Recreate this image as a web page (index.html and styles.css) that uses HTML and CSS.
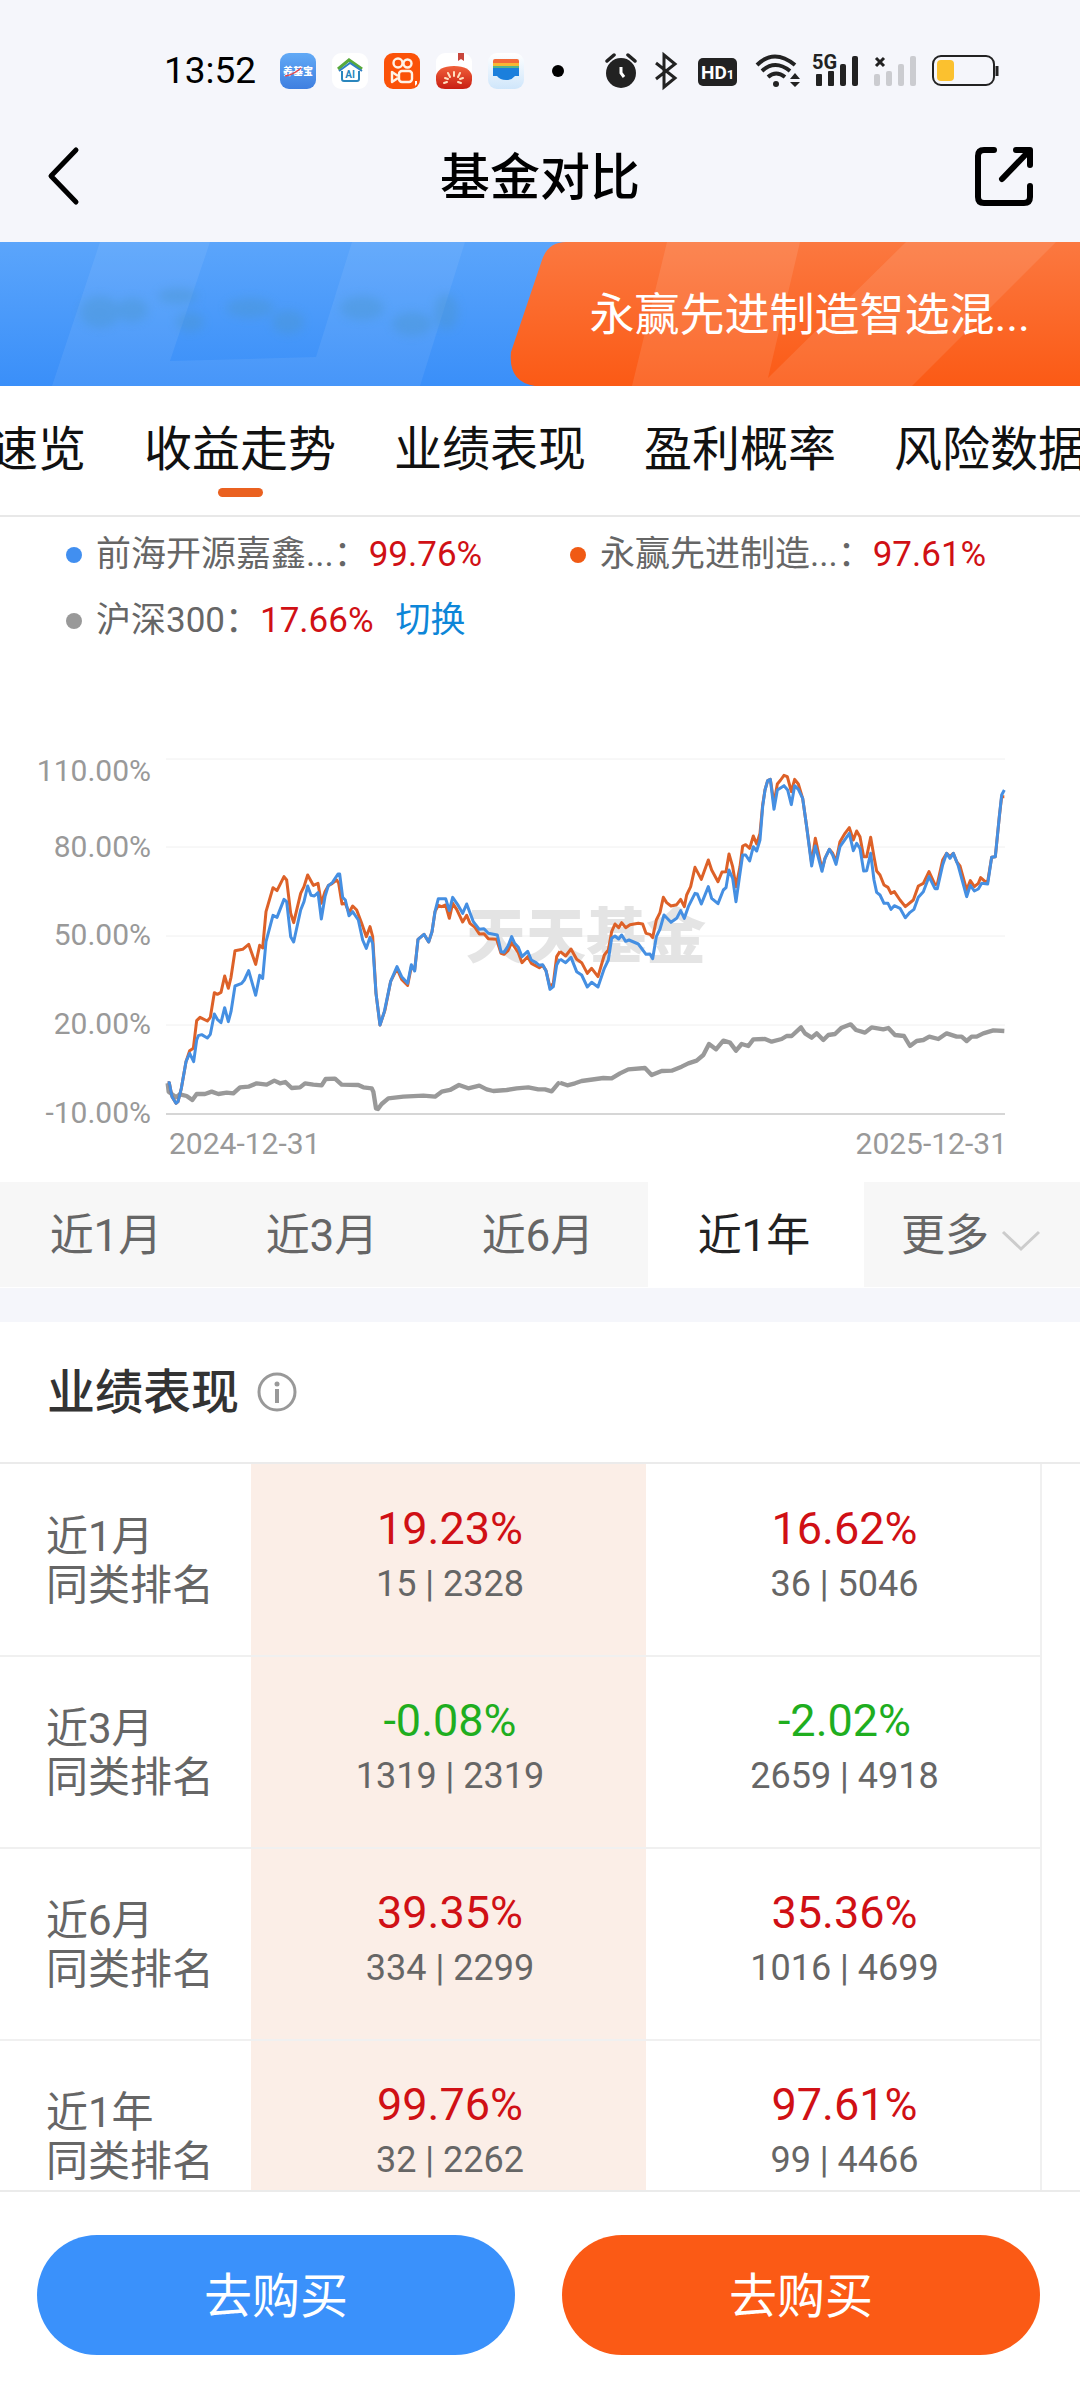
FILE: index.html
```html
<!DOCTYPE html>
<html lang="zh-CN">
<head>
<meta charset="utf-8">
<meta name="viewport" content="width=device-width, initial-scale=1">
<title>基金对比</title>
<link rel="stylesheet" href="styles.css">
</head>
<body>
<div class="top">
  <div class="status">
    <div class="status-left">
      <span class="clock">13:52</span>
      <svg class="app" viewBox="0 0 36 36"><defs><linearGradient id="a1" x2="0" y2="1"><stop stop-color="#62aaf6"/><stop offset="1" stop-color="#3f7fe0"/></linearGradient></defs><rect width="36" height="36" rx="9" fill="url(#a1)"/><text class="app-label" x="18" y="22" text-anchor="middle">养基宝</text><path d="M5 23q8-1 16-8" stroke="#e5484d" stroke-width="1.500" fill="none"/></svg>
      <svg class="app" viewBox="0 0 36 36"><rect width="36" height="36" rx="9" fill="#fff"/><path d="M6 16 17 7l13 9" fill="none" stroke="#58a93c" stroke-width="3"/><path d="M7 18 18 10l12 8" fill="none" stroke="#2f7fc4" stroke-width="2"/><path d="M10 18v8q0 2 2 2h13q2 0 2-2v-8" fill="none" stroke="#2a86bd" stroke-width="2"/><text class="ai-label" x="18" y="25" text-anchor="middle">AI</text></svg>
      <svg class="app" viewBox="0 0 36 36"><rect width="36" height="36" rx="9" fill="#fb5208"/><g fill="none" stroke="#fff3e6" stroke-width="2.400"><circle cx="14" cy="10" r="4.500"/><circle cx="23.500" cy="10.500" r="4"/><rect x="15" y="18" width="13" height="11" rx="3"/><path d="m14 23-6-4v10l6-4" stroke-linejoin="round"/></g><path d="M31 28h2v3l-2 2z" fill="#fff"/></svg>
      <svg class="app" viewBox="0 0 36 36"><defs><linearGradient id="a4" x2="0" y2="1"><stop stop-color="#f0603a"/><stop offset="1" stop-color="#c81e12"/></linearGradient></defs><rect width="36" height="36" rx="9" fill="#fff"/><path d="M22 0h6v8l-3-2-3 2z" fill="#c8463c"/><path d="M0 23q2-10 18-10t18 10v4q0 9-9 9H9q-9 0-9-9z" fill="url(#a4)"/><path d="M18 19v4m-6-3 2 4m10-4-2 4m-13 1 3 1m15-1-3 1m-16 4 3-1m14 1-3-1" stroke="#ffe0c0" stroke-width="2" stroke-linecap="round"/></svg>
      <svg class="app" viewBox="0 0 36 36"><defs><linearGradient id="a5" x2="0" y2="1"><stop stop-color="#fff"/><stop offset="1" stop-color="#cfe6fb"/></linearGradient></defs><rect width="36" height="36" rx="9" fill="url(#a5)"/><path d="M5 8q0-2 2-2h22q2 0 2 2v3H5z" fill="#f26a3a"/><path d="M5 10h26v4H5z" fill="#f7b733"/><path d="M5 13h26v3H5z" fill="#54b58b"/><path d="M5 15h26v8h-4q-3 4-9 4t-9-4H5z" fill="#1b7fdc"/></svg>
      <span class="dot"></span>
    </div>
    <div class="status-right">
      <svg width="36" height="40" viewBox="0 0 36 40" fill="#222"><circle cx="16" cy="22" r="15"/><path d="m2 10 7-6m14 0 7 6" stroke="#222" stroke-width="3.500" stroke-linecap="round"/><path d="M16 16v6l3 4" stroke="#fff" stroke-width="3" fill="none"/></svg>
      <svg width="30" height="40" viewBox="0 0 30 40" fill="none" stroke="#222" stroke-width="3"><path d="m3 12 19 15-11 9V4l11 9L3 28"/></svg>
      <svg width="46" height="40" viewBox="0 0 46 40"><rect x="3" y="7" width="39" height="28" rx="5" fill="#222"/><text class="hd-label" x="6" y="28">HD<tspan class="hd-sub">1</tspan></text></svg>
      <svg width="47" height="40" viewBox="0 0 47 40" fill="none" stroke="#222" stroke-width="4"><path d="M4 14q17-17 38 0M9 20q13-12 28 0M15 26q8-7 17 0"/><circle cx="23" cy="33" r="3" fill="#222" stroke="none"/><path d="m42 22 5 6H37zM42 36l5-5H37z" fill="#222" stroke="none"/></svg>
      <svg width="48" height="40" viewBox="0 0 48 40" fill="#222"><rect x="4" y="23" width="6" height="12" rx="1"/><rect x="16" y="20" width="6" height="15" rx="1"/><rect x="28" y="13" width="6" height="22" rx="2"/><rect x="40" y="5" width="6" height="30" rx="2"/><text class="net-label" x="0" y="18">5G</text></svg>
      <svg width="46" height="40" viewBox="0 0 46 40" fill="#cbccd0"><rect x="2" y="23" width="6" height="12" rx="2"/><rect x="14" y="20" width="6" height="15" rx="2"/><rect x="26" y="13" width="6" height="22" rx="2"/><rect x="38" y="5" width="6" height="30" rx="2"/><path d="m4 7 8 8m0-8-8 8" stroke="#222" stroke-width="3"/></svg>
      <svg width="70" height="40" viewBox="0 0 70 40"><rect x="3" y="5" width="61" height="29" rx="8" fill="none" stroke="#222" stroke-width="2"/><rect x="7" y="9" width="17" height="21" rx="4" fill="#fbc12f"/><path d="M67 15v10" stroke="#222" stroke-width="3"/></svg>
    </div>
  </div>
  <header class="header">
    <button class="icon-btn" aria-label="返回"><svg width="40" height="60" viewBox="0 0 40 60" fill="none" stroke="#000" stroke-width="5" stroke-linecap="round" stroke-linejoin="round"><path d="M30 4 5 30l25 26"/></svg></button>
    <h1>基金对比</h1>
    <button class="icon-btn" aria-label="分享"><svg width="60" height="60" viewBox="0 0 60 60" fill="none" stroke="#000" stroke-width="6" stroke-linecap="round" stroke-linejoin="round"><path d="M20 4H10q-6 0-6 6v41q0 6 6 6h40q6 0 6-6V40M42 4h14v15M55 5 28 33"/></svg></button>
  </header>
</div>

<section class="banner">
  <svg class="banner-bg" viewBox="0 0 1080 144" preserveAspectRatio="none">
    <defs>
      <linearGradient id="gb" x2="0" y2="1"><stop stop-color="#5ba5fb"/><stop offset="1" stop-color="#3a8ff9"/></linearGradient>
      <linearGradient id="go" x2="0" y2="1"><stop stop-color="#fb7840"/><stop offset="1" stop-color="#fb5a15"/></linearGradient>
      <filter id="soft" x="-20%" y="-50%" width="140%" height="200%"><feGaussianBlur stdDeviation="5"/></filter>
    </defs>
    <rect width="1080" height="144" fill="url(#gb)"/>
    <path d="M100 0h110l-40 119 146-4L352 0h113l-45 144H52z" fill="#fff" opacity=".07"/>
    <g fill="#4b95cc" opacity=".4" filter="url(#soft)"><ellipse cx="100" cy="70" rx="20" ry="16"/><ellipse cx="132" cy="68" rx="16" ry="12"/><ellipse cx="178" cy="54" rx="20" ry="8"/><ellipse cx="190" cy="80" rx="14" ry="10"/><ellipse cx="250" cy="66" rx="24" ry="10"/><ellipse cx="288" cy="80" rx="16" ry="12"/><ellipse cx="362" cy="66" rx="22" ry="12"/><ellipse cx="412" cy="82" rx="20" ry="12"/><ellipse cx="446" cy="70" rx="12" ry="18"/></g>
    <path d="M1080 0H566q-18 0-24 18L511 110q-3 30 24 34h545z" fill="url(#go)"/>
    <path d="M667 0h133l-32 136L906 0h150L912 144H632z" fill="#fff" opacity=".1"/>
  </svg>
  <span class="banner-name">永赢先进制造智选混...</span>
</section>

<nav class="tabs">
  <a href="#overview">速览</a>
  <a href="#trend" class="active" aria-current="true">收益走势</a>
  <a href="#performance">业绩表现</a>
  <a href="#odds">盈利概率</a>
  <a href="#risk">风险数据</a>
</nav>

<section class="trend" id="trend">
  <div class="legend">
    <div class="legend-item"><i class="mark blue"></i><span>前海开源嘉鑫...：</span><b>99.76%</b></div>
    <div class="legend-item"><i class="mark orange"></i><span>永赢先进制造...：</span><b>97.61%</b></div>
    <div class="legend-item"><i class="mark gray"></i><span>沪深300：</span><b>17.66%</b><button class="switch">切换</button></div>
  </div>
  <svg class="chart" viewBox="0 0 1080 442" role="img" aria-label="收益走势">
    <g stroke="#f0f0f0" stroke-width="1"><path d="M166 19h839M166 107h839M166 196h839M166 285h839"/><path d="M166 374h839" stroke="#d6d6d6" stroke-width="2"/></g>
    <text class="watermark" x="466" y="218">天天基金</text>
    <g class="axis" text-anchor="end"><text x="151" y="41">110.00%</text><text x="151" y="117">80.00%</text><text x="151" y="205">50.00%</text><text x="151" y="294">20.00%</text><text x="151" y="383">-10.00%</text></g>
    <g class="axis"><text x="169" y="414">2024-12-31</text><text x="1007" y="414" text-anchor="end">2025-12-31</text></g>
    <g class="lines" transform="translate(140 0) scale(.33333)">
      <path class="l-gray" d="M83 1030 86 1055 108 1072 120 1063 140 1068 157 1080 170 1062 195 1062 215 1055 235 1062 260 1058 280 1060 300 1042 325 1040 350 1030 380 1034 403 1022 420 1030 436 1026 455 1044 480 1042 495 1030 520 1034 545 1036 557 1017 585 1016 605 1034 655 1035 670 1042 695 1045 700 1055 708 1105 714 1107 725 1092 745 1075 790 1070 850 1067 885 1070 905 1055 930 1050 957 1035 985 1045 1018 1037 1040 1048 1060 1053 1100 1050 1130 1045 1165 1042 1195 1048 1215 1048 1235 1054 1255 1030 1260 1028"/>
      <path class="l-orange" d="M83 1028 88 1028 96 1070 108 1090 114 1085 124 1045 138 965 149 932 160 925 170 842 180 832 202 843 211 832 223 758 232 763 243 757 254 708 265 745 273 712 285 632 308 628 326 613 347 673 359 616 368 624 378 515 399 443 411 452 432 410 440 420 452 520 461 548 482 460 492 440 503 405 520 436 534 430 544 490 555 455 565 437 577 430 590 420 596 430 606 492 616 490 627 518 638 498 650 510 665 550 679 590 690 560 698 590 708 760 720 855 735 810 752 724 771 686 785 718 803 736 814 680 824 690 834 598 852 583 866 606 876 575 885 515 895 496 905 500 917 495 928 535 938 490 950 508 968 546 980 526 990 550 1005 562 1018 582 1032 581 1045 596 1070 598 1083 640 1092 643 1104 632 1115 608 1135 638 1146 668 1163 650 1174 670 1198 683 1208 676 1218 692 1230 742 1240 730 1250 650 1260 634"/>
      <path class="l-blue" d="M83 1028 88 1028 96 1070 108 1090 114 1085 124 1045 138 965 149 940 161 965 170 900 175 887 185 884 202 894 211 883 223 822 232 838 243 848 254 803 265 845 273 815 285 738 305 730 313 720 326 692 347 766 359 706 368 715 378 605 399 526 411 532 432 478 440 485 452 590 461 606 482 510 492 485 503 438 513 466 523 468 534 458 544 537 555 470 565 437 577 428 594 402 599 402 608 472 616 480 627 527 638 515 655 540 668 600 679 625 690 592 698 610 708 760 720 855 733 815 752 724 771 680 785 710 803 730 814 674 824 693 834 598 852 583 866 606 876 575 885 515 895 476 917 476 928 512 938 472 955 497 968 520 980 492 1000 545 1018 568 1032 566 1045 580 1072 585 1083 635 1092 637 1104 618 1115 590 1124 610 1135 622 1146 650 1163 634 1174 660 1188 668 1198 676 1208 674 1218 692 1230 748 1240 740 1250 675 1260 657"/>
      <g transform="translate(1260 0)">
        <path class="l-gray" d="M0 1028 22 1036 45 1030 65 1023 130 1014 155 1015 180 1000 205 988 255 984 275 1005 305 993 335 992 365 980 385 970 410 962 430 945 447 912 468 928 490 902 510 908 528 932 545 912 565 918 580 898 615 897 635 905 665 897 680 888 695 888 723 862 735 880 755 893 770 880 790 900 805 885 825 882 845 863 872 853 888 870 915 878 935 862 970 868 985 864 1005 885 1032 888 1050 918 1070 903 1090 900 1108 890 1135 897 1160 880 1190 890 1205 890 1220 903 1235 890 1250 890 1270 880 1300 871 1333 873"/>
        <path class="l-orange" d="M0 634 17 648 33 627 50 658 65 668 82 700 95 685 114 710 133 645 145 630 155 575 165 552 176 563 185 548 197 563 210 554 235 550 248 552 258 580 270 583 278 593 289 540 300 518 310 472 320 488 333 498 350 494 362 478 373 500 380 465 392 440 405 382 424 418 445 360 455 390 474 425 486 396 498 395 507 342 518 380 528 440 540 380 548 318 557 314 569 325 580 288 590 312 600 280 608 195 615 150 623 122 631 118 642 190 652 132 662 120 672 106 682 110 694 155 704 118 715 132 728 175 740 260 755 370 766 295 786 388 795 355 808 328 818 340 828 365 840 305 855 280 868 263 880 300 890 273 900 290 911 350 920 350 932 292 942 350 950 393 960 405 972 435 984 442 993 460 1003 455 1020 480 1036 500 1060 480 1075 438 1090 430 1107 395 1125 434 1132 432 1148 360 1160 340 1170 350 1180 340 1190 365 1200 378 1220 450 1231 422 1243 440 1255 430 1262 413 1275 424 1283 425 1295 352 1306 350 1318 230 1325 170 1333 170"/>
        <path class="l-blue" d="M0 657 17 668 33 652 50 695 65 705 82 741 95 727 114 741 133 685 145 660 155 595 165 588 176 597 185 585 197 604 207 600 235 612 258 643 270 642 278 656 289 590 300 567 312 525 333 547 350 535 362 512 373 535 385 500 405 460 412 462 424 492 445 440 455 475 474 491 490 450 498 443 507 390 518 415 528 485 540 400 548 345 557 345 569 363 580 320 590 333 600 300 608 200 615 150 623 122 631 118 642 208 652 150 672 137 683 150 694 194 704 137 715 148 728 175 740 260 755 378 766 318 786 394 795 355 808 328 818 345 828 373 840 320 868 280 880 332 890 310 900 325 911 393 920 392 932 340 942 420 950 457 960 465 972 490 984 490 993 508 1003 497 1020 505 1036 533 1050 517 1062 508 1075 472 1090 455 1107 410 1125 446 1132 446 1148 375 1160 340 1170 355 1180 340 1195 378 1205 415 1220 470 1231 436 1243 453 1255 447 1265 430 1283 432 1295 352 1306 350 1318 230 1325 165 1333 150"/>
      </g>
    </g>
  </svg>
  <div class="ranges">
    <button>近1月</button><button>近3月</button><button>近6月</button><button class="on">近1年</button><button class="more">更多<svg width="40" height="24" viewBox="0 0 40 24" fill="none" stroke="#ccc" stroke-width="3"><path d="m2 3 18 17L38 3"/></svg></button>
  </div>
</section>

<section class="performance" id="performance">
  <div class="section-title"><h2>业绩表现</h2><svg width="40" height="40" viewBox="0 0 40 40" fill="none" stroke="#999" stroke-width="3"><circle cx="20" cy="20" r="18"/><path d="M20 17v14" stroke-width="4"/><circle cx="20" cy="12" r="2.500" fill="#999" stroke="none"/></svg></div>
  <table>
    <colgroup><col class="c-name"><col class="c-fund"><col class="c-fund"><col></colgroup>
    <tbody>
      <tr><th scope="row">近1月<br>同类排名</th><td class="best"><b>19.23%</b><span>15 | 2328</span></td><td><b>16.62%</b><span>36 | 5046</span></td><td></td></tr>
      <tr><th scope="row">近3月<br>同类排名</th><td class="best"><b class="down">-0.08%</b><span>1319 | 2319</span></td><td><b class="down">-2.02%</b><span>2659 | 4918</span></td><td></td></tr>
      <tr><th scope="row">近6月<br>同类排名</th><td class="best"><b>39.35%</b><span>334 | 2299</span></td><td><b>35.36%</b><span>1016 | 4699</span></td><td></td></tr>
      <tr><th scope="row">近1年<br>同类排名</th><td class="best"><b>99.76%</b><span>32 | 2262</span></td><td><b>97.61%</b><span>99 | 4466</span></td><td></td></tr>
    </tbody>
  </table>
</section>

<footer class="actions">
  <button class="buy buy-blue">去购买</button>
  <button class="buy buy-orange">去购买</button>
</footer>
</body>
</html>
```
FILE: styles.css
```css
* { box-sizing: border-box; }
body {
  margin: 0;
  height: 100vh;
  display: flex;
  flex-direction: column;
  overflow: hidden;
  background: #fff;
  color: #333;
  font-family: Roboto, "Noto Sans CJK SC", sans-serif;
}
h1, h2 { margin: 0; font-weight: 500; }
button { border: 0; padding: 0; background: none; font-family: inherit; color: inherit; }
svg { display: block; }
body > * { flex: none; }

.top { background: #f5f6fb; padding-bottom: 32px; }
.status {
  display: flex;
  justify-content: space-between;
  align-items: center;
  height: 142px;
  padding: 0 80px 0 164px;
}
.status-left { display: flex; align-items: center; gap: 16px; }
.clock { margin-right: 8px; font-size: 37px; font-weight: 400; line-height: 40px; color: #000; }
.app { width: 36px; height: 36px; }
.app-label { font-size: 10px; font-weight: 900; fill: #fff; }
.ai-label { font-size: 10px; font-weight: 700; fill: #2a86bd; }
.dot { width: 12px; height: 12px; margin-left: 12px; border-radius: 50%; background: #000; }
.status-right { display: flex; align-items: center; gap: 12px; }
.hd-label { font-size: 19px; font-weight: 700; fill: #fff; }
.hd-sub { font-size: 13px; }
.net-label { font-size: 20px; font-weight: 700; stroke: #f5f6fb; stroke-width: 3px; paint-order: stroke; }

.header {
  display: flex;
  justify-content: space-between;
  align-items: center;
  height: 68px;
  padding: 0 46px;
}
.icon-btn { width: 60px; height: 60px; }
h1 { padding-top: 4px; font-size: 50px; line-height: 64px; color: #000; }

.banner {
  position: relative;
  height: 144px;
  display: flex;
  align-items: center;
  justify-content: flex-end;
  padding: 4px 50px 0 0;
}
.banner-bg { position: absolute; inset: 0; width: 100%; height: 100%; }
.banner-name { position: relative; font-size: 45px; line-height: 64px; color: #fff; }

.tabs {
  display: flex;
  gap: 58px;
  height: 131px;
  padding-top: 32px;
  overflow: hidden;
  border-bottom: 2px solid #e8e8e8;
}
.tabs a {
  flex: none;
  display: flex;
  flex-direction: column;
  align-items: center;
  font-size: 48px;
  line-height: 64px;
  color: #111;
  text-decoration: none;
}
.tabs a:first-child { margin-left: -10px; }
.tabs .active::after {
  content: "";
  width: 45px;
  height: 9px;
  margin-top: 6px;
  border-radius: 5px;
  background: #ea6120;
}

.legend {
  display: grid;
  grid-template-columns: 504px 1fr;
  row-gap: 18px;
  padding: 14px 0 0 66px;
  font-size: 35px;
  line-height: 48px;
  color: #666;
}
.legend-item { display: flex; align-items: center; white-space: nowrap; }
.legend b { font-weight: 400; color: #d01015; }
.mark { width: 16px; height: 16px; margin-right: 14px; border-radius: 50%; }
.blue { background: #418ff0; }
.orange { background: #f05a14; }
.gray { background: #999; }
.switch { margin-left: 22px; font-size: 35px; line-height: 48px; color: #0d86d8; }

.chart { width: 100%; margin-top: 95px; }
.axis { font-size: 30px; fill: #999; }
.watermark { font-size: 60px; font-weight: 900; fill: #e4e4e4; }
.lines path { fill: none; stroke-width: 9px; stroke-linejoin: round; }
.lines .l-gray { stroke: #999; stroke-width: 13px; }
.lines .l-orange { stroke: #dd6128; }
.lines .l-blue { stroke: #458fe2; }

.ranges { display: grid; grid-template-columns: repeat(5, 1fr); height: 105px; background: #f7f7f7; }
.ranges button { font-size: 44px; line-height: 64px; color: #666; padding: 2px 4px 0 0; }
.ranges .on { background: #fff; color: #222; }
.ranges .more { display: flex; align-items: center; justify-content: center; gap: 12px; padding-right: 2px; }
.more svg { margin-top: 10px; }

.performance { flex: 1; min-height: 0; overflow: hidden; border-top: 34px solid #f5f6fb; }
.trend { padding-bottom: 1px; }
.section-title { display: flex; align-items: center; gap: 18px; height: 142px; padding-left: 47px; border-bottom: 2px solid #ebebeb; }
h2 { padding-top: 2px; font-size: 48px; line-height: 64px; }

table { width: 100%; border-collapse: collapse; table-layout: fixed; }
.c-name { width: 251px; }
.c-fund { width: 395px; }
tr { height: 192px; border-bottom: 2px solid #f0f0f0; }
th { padding: 2px 0 0 46px; text-align: left; font-size: 42px; font-weight: 400; line-height: 49px; color: #666; }
td { padding: 0 0 10px 3px; text-align: center; }
td + td { border-right: 2px solid #f0f0f0; }
td:last-child { border-right: 0; border-bottom: 2px solid #fff; }
.best { background: #fbeee7; }
td b { display: block; margin-bottom: 6px; font-size: 45px; font-weight: 400; line-height: 52px; color: #d01015; }
td .down { color: #1fae1f; }
td span { display: block; font-size: 36px; line-height: 46px; color: #666; }

.actions {
  display: grid;
  grid-template-columns: 1fr 1fr;
  gap: 47px;
  padding: 43px 40px 45px 37px;
  border-top: 2px solid #ebebeb;
}
.buy { height: 120px; padding-bottom: 6px; border-radius: 60px; font-size: 48px; color: #fff; }
.buy-blue { background: #3a91fb; }
.buy-orange { background: #fb5a15; }
```
